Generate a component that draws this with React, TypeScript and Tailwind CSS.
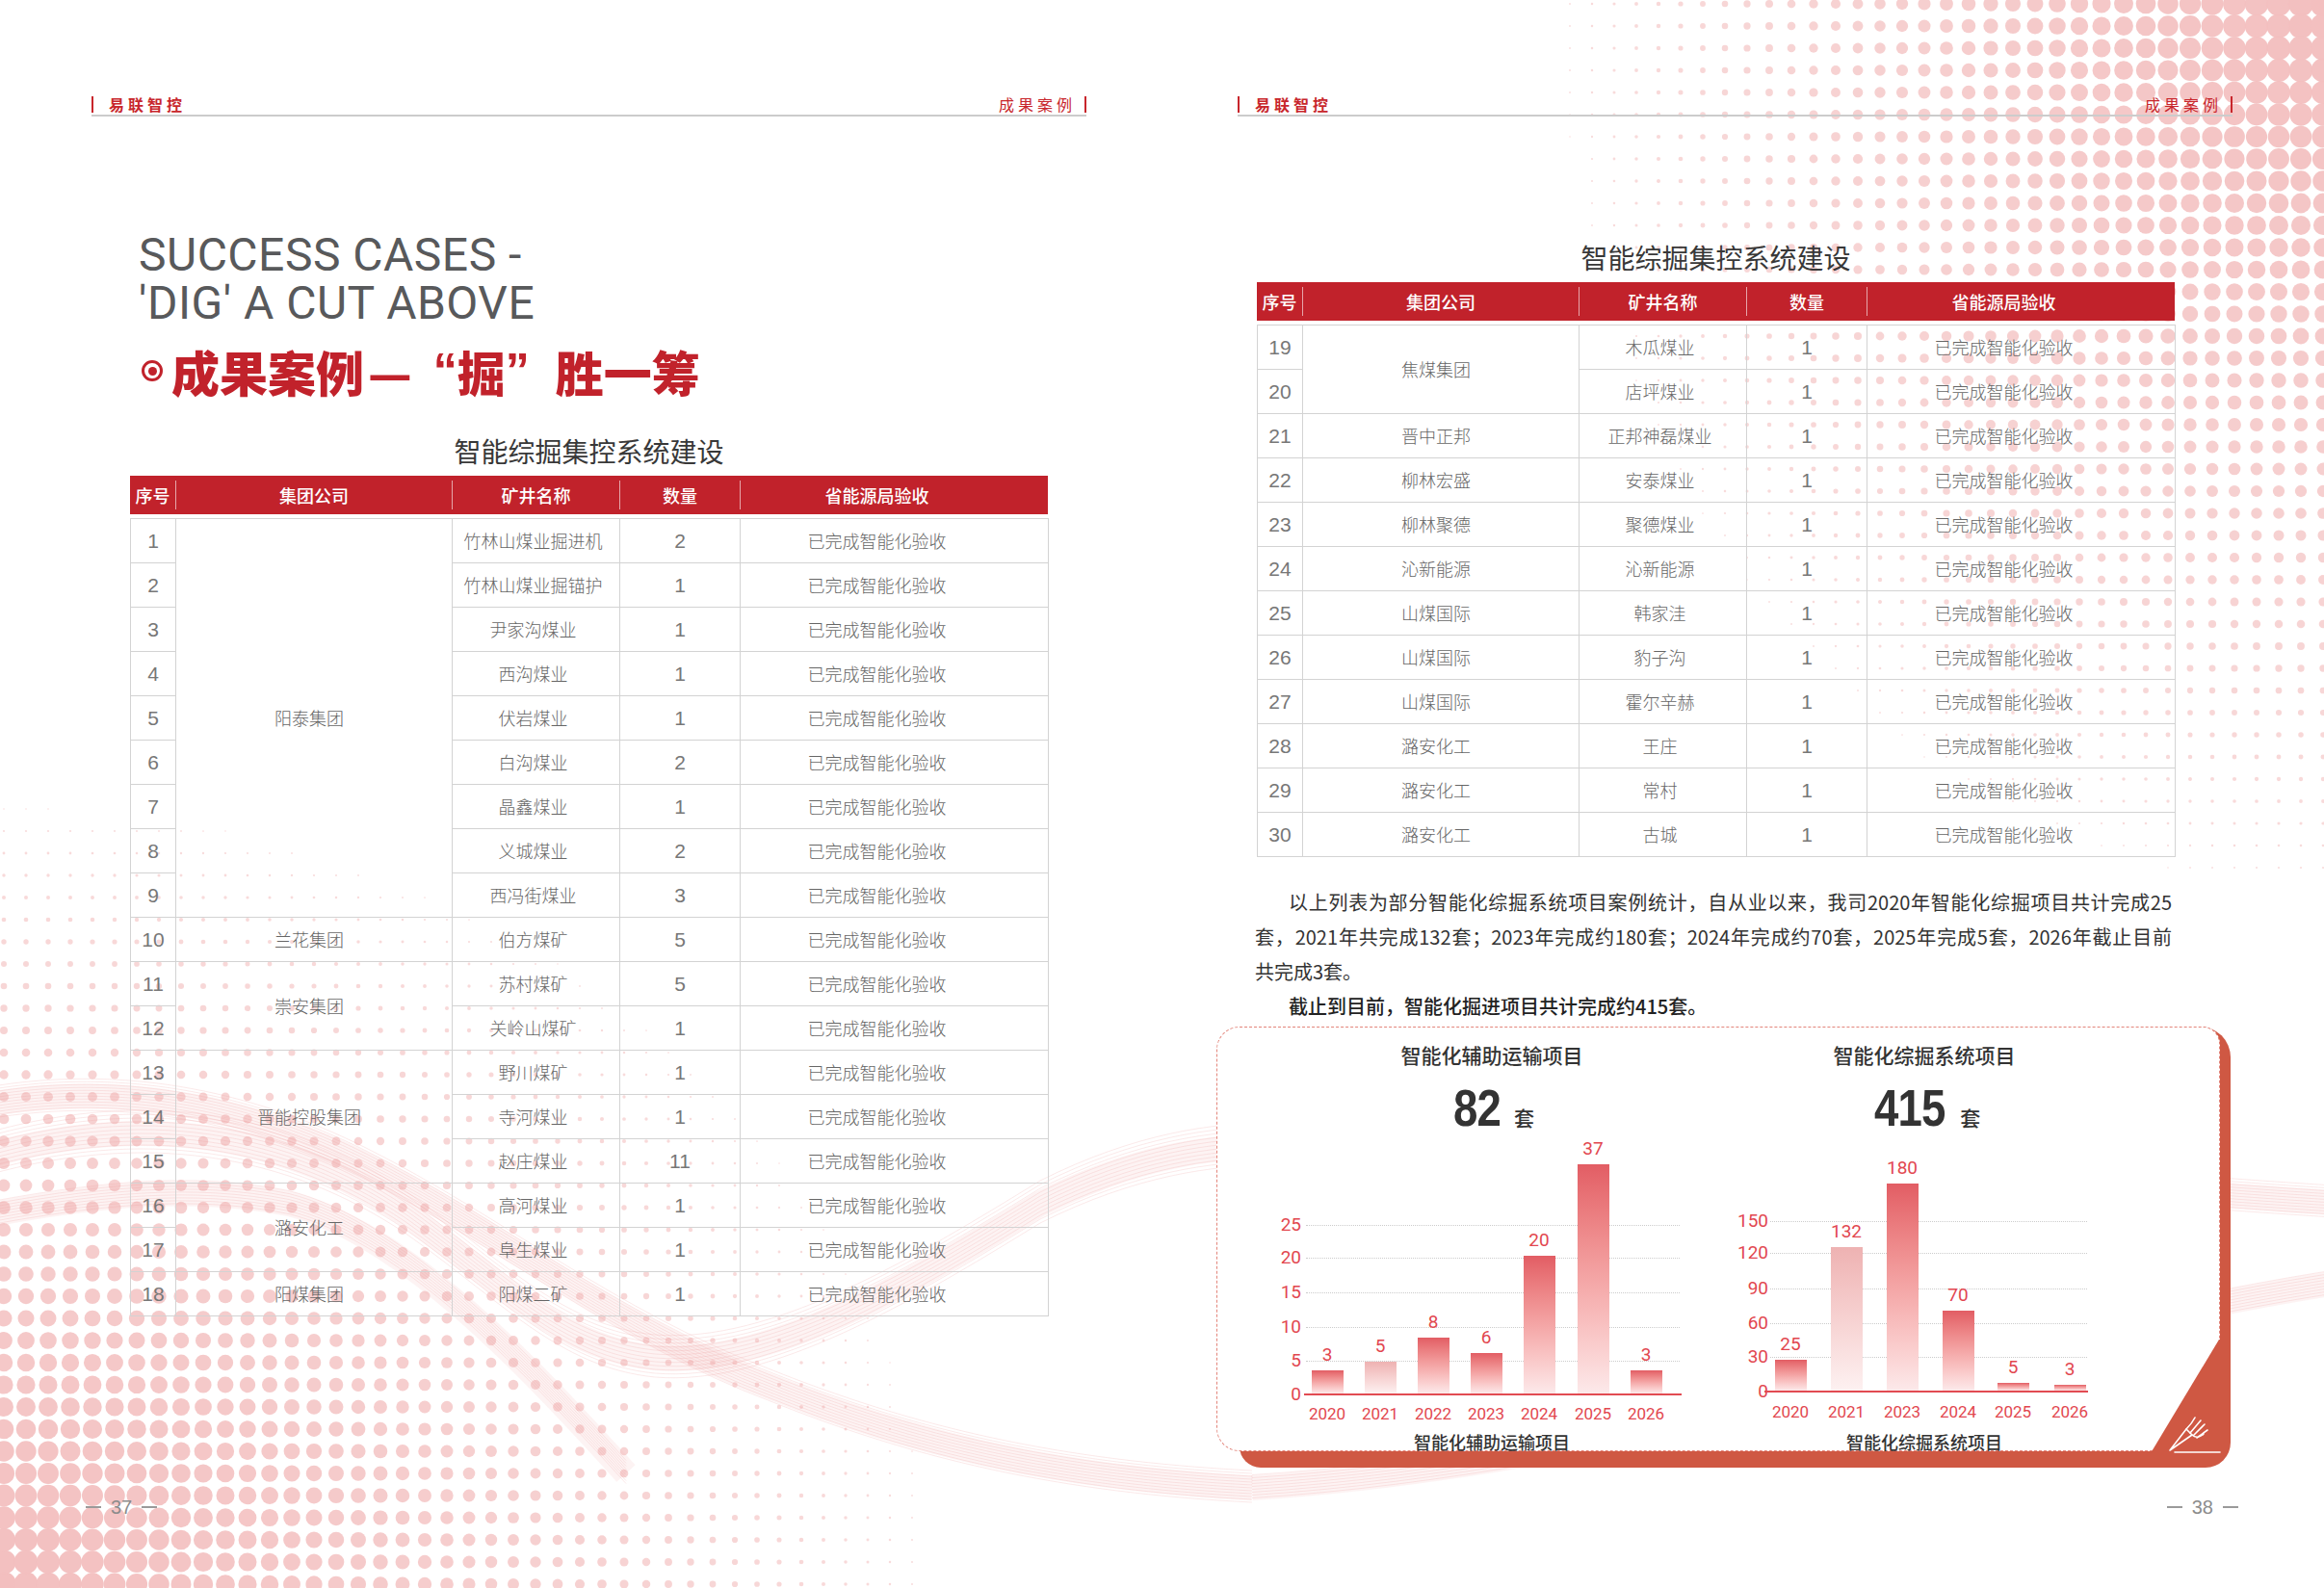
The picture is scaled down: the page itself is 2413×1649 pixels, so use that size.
import type { ReactNode } from "react";

type Row = { no: number; group?: string; span?: number; mine: string; qty: number };

const leftRows: Row[] = [
  { no: 1, group: "阳泰集团", span: 9, mine: "竹林山煤业掘进机", qty: 2 },
  { no: 2, mine: "竹林山煤业掘锚护", qty: 1 },
  { no: 3, mine: "尹家沟煤业", qty: 1 },
  { no: 4, mine: "西沟煤业", qty: 1 },
  { no: 5, mine: "伏岩煤业", qty: 1 },
  { no: 6, mine: "白沟煤业", qty: 2 },
  { no: 7, mine: "晶鑫煤业", qty: 1 },
  { no: 8, mine: "义城煤业", qty: 2 },
  { no: 9, mine: "西冯街煤业", qty: 3 },
  { no: 10, group: "兰花集团", span: 1, mine: "伯方煤矿", qty: 5 },
  { no: 11, group: "崇安集团", span: 2, mine: "苏村煤矿", qty: 5 },
  { no: 12, mine: "关岭山煤矿", qty: 1 },
  { no: 13, group: "晋能控股集团", span: 3, mine: "野川煤矿", qty: 1 },
  { no: 14, mine: "寺河煤业", qty: 1 },
  { no: 15, mine: "赵庄煤业", qty: 11 },
  { no: 16, group: "潞安化工", span: 2, mine: "高河煤业", qty: 1 },
  { no: 17, mine: "阜生煤业", qty: 1 },
  { no: 18, group: "阳煤集团", span: 1, mine: "阳煤二矿", qty: 1 },
];

const rightRows: Row[] = [
  { no: 19, group: "焦煤集团", span: 2, mine: "木瓜煤业", qty: 1 },
  { no: 20, mine: "店坪煤业", qty: 1 },
  { no: 21, group: "晋中正邦", span: 1, mine: "正邦神磊煤业", qty: 1 },
  { no: 22, group: "柳林宏盛", span: 1, mine: "安泰煤业", qty: 1 },
  { no: 23, group: "柳林聚德", span: 1, mine: "聚德煤业", qty: 1 },
  { no: 24, group: "沁新能源", span: 1, mine: "沁新能源", qty: 1 },
  { no: 25, group: "山煤国际", span: 1, mine: "韩家洼", qty: 1 },
  { no: 26, group: "山煤国际", span: 1, mine: "豹子沟", qty: 1 },
  { no: 27, group: "山煤国际", span: 1, mine: "霍尔辛赫", qty: 1 },
  { no: 28, group: "潞安化工", span: 1, mine: "王庄", qty: 1 },
  { no: 29, group: "潞安化工", span: 1, mine: "常村", qty: 1 },
  { no: 30, group: "潞安化工", span: 1, mine: "古城", qty: 1 },
];

const narrow = "font-['Liberation_Sans_Narrow','Liberation_Sans',sans-serif]";
const colW = ["w-[47px]", "w-[287px]", "w-[174px]", "w-[125px]", "w-[320px]"];
const heads = ["序号", "集团公司", "矿井名称", "数量", "省能源局验收"];

// halftone dots, computed once
type Dot = { x: number; y: number; r: number; o: number };
const dots: Dot[] = [];
for (let x = 1400; x <= 2424; x += 23) {
  for (let y = 4; y <= 1010; y += 23) {
    const d = Math.hypot((2413 - x) / 860, y / 1000);
    if (d < 1) {
      const r = 13.5 * Math.pow(1 - d, 1.1);
      if (r > 0.8) dots.push({ x, y, r, o: 0.5 + 0.5 * (1 - d) });
    }
  }
}
for (let x = 4; x <= 1120; x += 23) {
  for (let y = 1645; y >= 720; y -= 23) {
    const d = Math.hypot(x / 1050, (1649 - y) / 880);
    if (d < 1) {
      const r = 13 * Math.pow(1 - d, 1.1);
      if (r > 0.8) dots.push({ x, y, r, o: 0.5 + 0.5 * (1 - d) });
    }
  }
}

function Ribbon({ d, count = 12, spread = 3 }: { d: string; count?: number; spread?: number }) {
  return (
    <g fill="none">
      <path d={d} stroke="#f1b3b3" strokeWidth={26} opacity={0.16} />
      {Array.from({ length: count }, (_, i) => (
        <path
          key={i}
          d={d}
          transform={`translate(0 ${i * spread - (count * spread) / 2})`}
          stroke="#eb9d9d"
          strokeWidth={1}
          opacity={0.22}
        />
      ))}
    </g>
  );
}

function Backdrop() {
  return (
    <svg
      className="pointer-events-none absolute inset-0"
      width={2413}
      height={1649}
      viewBox="0 0 2413 1649"
    >
      {dots.map((p, i) => (
        <circle key={i} cx={p.x} cy={p.y} r={p.r} fill="#f3bfbf" opacity={p.o} />
      ))}
      <Ribbon d="M -30 1150 C 120 1120, 260 1150, 380 1210 C 520 1280, 640 1380, 800 1440 C 950 1500, 1100 1535, 1300 1545" />
      <Ribbon d="M -30 1205 C 150 1150, 300 1180, 420 1260 C 520 1330, 580 1400, 680 1410 C 800 1420, 950 1330, 1080 1250 C 1180 1200, 1260 1190, 1320 1190" spread={4} />
      <Ribbon d="M -30 1265 C 100 1240, 200 1230, 300 1250 C 420 1280, 550 1420, 650 1530" count={9} />
      <Ribbon d="M 1300 1190 C 1700 1180, 2100 1230, 2440 1250" />
      <Ribbon d="M 1300 1545 C 1700 1520, 2100 1380, 2440 1330" count={9} />
    </svg>
  );
}

function PageHeader() {
  return (
    <div className="flex h-[24px] items-center justify-between border-b-2 border-[#cccccc]">
      <div className="flex items-center">
        <span className="h-[17px] w-[2px] bg-[#c8262c]" />
        <span className="ml-[16px] text-[16px] leading-[16px] font-bold tracking-[4px] text-[#c8262c]">
          易联智控
        </span>
      </div>
      <div className="flex items-center">
        <span className="text-[16px] leading-[16px] tracking-[4px] text-[#c8262c]">成果案例</span>
        <span className="ml-[9px] h-[17px] w-[2px] bg-[#c8262c]" />
      </div>
    </div>
  );
}

function PageNo({ children, className }: { children: ReactNode; className: string }) {
  return (
    <div className={`flex items-center gap-[10px] ${className}`}>
      <span className="h-[1.5px] w-[16px] bg-[#9a9a9a]" />
      <span className={`${narrow} text-[20px] leading-[20px] text-[#8c8c8c]`}>{children}</span>
      <span className="h-[1.5px] w-[16px] bg-[#9a9a9a]" />
    </div>
  );
}

function CaseTable({ rows, className }: { rows: Row[]; className: string }) {
  const cell = "border border-[#d3d3d3] p-0 text-center align-middle text-[18px] font-light text-[#666]";
  const num = `border border-[#d3d3d3] p-0 text-center align-middle text-[21px] text-[#777] ${narrow}`;
  return (
    <div className={`w-[953px] ${className}`}>
      <h3 className="text-center text-[28px] leading-[28px] text-[#383838]">智能综掘集控系统建设</h3>
      <div className="mt-[12px] flex h-[40px] bg-[#c1222b] py-[5px]">
        {heads.map((h, i) => (
          <div
            key={h}
            className={`flex items-center justify-center text-[18px] font-medium text-white ${colW[i]} ${
              i > 0 ? "border-l border-white/60" : ""
            } ${i === 4 ? "pr-[36px]" : ""}`}
          >
            {h}
          </div>
        ))}
      </div>
      <table className="mt-[4px] w-full table-fixed border-collapse border border-[#d3d3d3]">
        <colgroup>
          {colW.map((c) => (
            <col key={c} className={c} />
          ))}
        </colgroup>
        <tbody>
          {rows.map((r) => (
            <tr key={r.no} className="h-[46px]">
              <td className={num}>{r.no}</td>
              {r.group && (
                <td rowSpan={r.span} className={`${cell} pr-[10px]`}>
                  {r.group}
                </td>
              )}
              <td className={`${cell} pr-[6px]`}>{r.mine}</td>
              <td className={num}>{r.qty}</td>
              <td className={`${cell} pr-[36px]`}>已完成智能化验收</td>
            </tr>
          ))}
        </tbody>
      </table>
    </div>
  );
}

type Bar = { year: string; v: number; c: number; h: number; light?: boolean };
type Tick = { l: string; y: number };

type ChartProps = {
  className: string;
  headClass: string;
  title: string;
  total: string;
  ticks: Tick[];
  tickW: number;
  axis: { top: number; left: number; width: number };
  grid: { left: number; width: number };
  base: number;
  xTop: number;
  bars: Bar[];
};

function Chart({ className, headClass, title, total, ticks, tickW, axis, grid, base, xTop, bars }: ChartProps) {
  return (
    <div className={`flex flex-col ${className}`}>
      <div className={`flex w-[400px] flex-col items-center pt-[18px] ${headClass}`}>
        <h4 className="text-[21px] leading-[21px] font-medium text-[#333]">{title}</h4>
        <div className="mt-[18px] flex items-baseline gap-[10px]">
          <span
            className={`${narrow} inline-block origin-center scale-x-[0.86] text-[53px] leading-[53px] font-bold tracking-[-1px] text-[#333]`}
          >
            {total}
          </span>
          <span className="text-[21px] font-medium text-[#333]">套</span>
        </div>
      </div>
      <div className="relative mt-[12px] h-[296px] font-['Roboto',sans-serif] text-[#e2474f]">
        {ticks.slice(1).map((t) => (
          <div
            key={t.l}
            className="absolute border-t border-dotted border-[#cccccc]"
            style={{ top: t.y, left: grid.left, width: grid.width }}
          />
        ))}
        {ticks.map((t) => (
          <div
            key={t.l}
            className="absolute left-0 h-[22px] text-right text-[19px] leading-[22px]"
            style={{ top: t.y - 11, width: tickW }}
          >
            {t.l}
          </div>
        ))}
        {bars.map((b) => (
          <div key={b.year}>
            <div
              className="absolute w-[60px] text-center text-[19px] leading-[20px]"
              style={{ left: b.c - 30, top: base - b.h - 26 }}
            >
              {b.v}
            </div>
            <div
              className={`absolute w-[33px] bg-linear-to-b ${
                b.light ? "from-[#eeb2b2] to-[#fdf1f1]" : "from-[#e25d64] to-[#fce9ea]"
              }`}
              style={{ left: b.c - 16.5, top: base - b.h, height: b.h }}
            />
            <div
              className="absolute w-[60px] text-center text-[17px] leading-[18px]"
              style={{ left: b.c - 30, top: xTop }}
            >
              {b.year}
            </div>
          </div>
        ))}
        <div
          className="absolute h-[2px] bg-[#e24b52]"
          style={{ top: axis.top, left: axis.left, width: axis.width }}
        />
      </div>
      <p className={`mt-[4px] w-[400px] text-center text-[18px] leading-[18px] font-medium text-[#333] ${headClass}`}>
        {title}
      </p>
    </div>
  );
}

function ChartPanel({ className }: { className: string }) {
  return (
    <div className={`relative h-[458px] w-[1053px] ${className}`}>
      <div className="absolute inset-y-0 left-[24px] right-0 rounded-tr-[32px] rounded-br-[26px] rounded-bl-[22px] bg-[#cf5843]" />
      <div className="absolute left-0 top-0 flex h-[441px] w-[1042px] rounded-tl-[24px] rounded-tr-[18px] rounded-bl-[24px] border border-dashed border-[#e3857b] bg-white">
        <Chart
          className="w-[526px]"
          headClass="ml-[85px]"
          title="智能化辅助运输项目"
          total="82"
          tickW={87}
          ticks={[
            { l: "0", y: 259 },
            { l: "5", y: 224 },
            { l: "10", y: 189 },
            { l: "15", y: 153 },
            { l: "20", y: 117 },
            { l: "25", y: 83 },
          ]}
          axis={{ top: 258, left: 90, width: 392 }}
          grid={{ left: 92, width: 388 }}
          base={258}
          xTop={270}
          bars={[
            { year: "2020", v: 3, c: 114, h: 24 },
            { year: "2021", v: 5, c: 169, h: 33, light: true },
            { year: "2022", v: 8, c: 224, h: 58 },
            { year: "2023", v: 6, c: 279, h: 42 },
            { year: "2024", v: 20, c: 334, h: 143 },
            { year: "2025", v: 37, c: 390, h: 238 },
            { year: "2026", v: 3, c: 445, h: 24 },
          ]}
        />
        <Chart
          className="w-[514px]"
          headClass="ml-[8px]"
          title="智能化综掘系统项目"
          total="415"
          tickW={46}
          ticks={[
            { l: "0", y: 256 },
            { l: "30", y: 220 },
            { l: "60", y: 185 },
            { l: "90", y: 149 },
            { l: "120", y: 112 },
            { l: "150", y: 79 },
          ]}
          axis={{ top: 255, left: 42, width: 336 }}
          grid={{ left: 48, width: 329 }}
          base={255}
          xTop={268}
          bars={[
            { year: "2020", v: 25, c: 69, h: 32 },
            { year: "2021", v: 132, c: 127, h: 149, light: true },
            { year: "2023", v: 180, c: 185, h: 215 },
            { year: "2024", v: 70, c: 243, h: 83 },
            { year: "2025", v: 5, c: 300, h: 8 },
            { year: "2026", v: 3, c: 359, h: 6 },
          ]}
        />
      </div>
      {/* corner tab with pen icon */}
      <svg className="absolute left-[967px] top-[322px]" width={86} height={136} viewBox="0 0 86 136">
        <polygon points="74,3 76,3 76,121 3,121" fill="#cf5843" />
        <g stroke="#fff" strokeWidth={1.6} fill="none" strokeLinecap="round" strokeLinejoin="round">
          <polygon points="23,118 40,96 46,102" />
          <path d="M40 96 C44 92 47 88 49 84 M44 100 L55 87 M48 102 L59 91 M51 105 L62 97 M46 102 C50 106 55 104 58 101" />
          <path d="M28 120 L75 120" />
        </g>
      </svg>
    </div>
  );
}

function LeftPage() {
  return (
    <section className="flex h-full flex-col pl-[95px] pr-[78px] pt-[97px]">
      <PageHeader />
      <div className="ml-[49px] mt-[119px] font-['Roboto',sans-serif] text-[48px] leading-[50px] tracking-[0.5px] text-[#58595b]">
        <p>SUCCESS CASES -</p>
        <p>'DIG' A CUT ABOVE</p>
      </div>
      <h2 className="ml-[52px] mt-[21px] flex h-[48px] items-center text-[50px] leading-[48px] font-black text-[#c1222b]">
        <span className="mr-[9px] flex h-[22px] w-[22px] items-center justify-center rounded-full border-[3px] border-[#c1222b]">
          <span className="h-[9px] w-[9px] rounded-full bg-[#c1222b]" />
        </span>
        <span>成果案例</span>
        <span className="ml-[4px]">—</span>
        <span className="ml-[22px] font-['Liberation_Sans',sans-serif] font-bold">“</span>
        <span>掘</span>
        <span className="font-['Liberation_Sans',sans-serif] font-bold">”</span>
        <span className="ml-[27px]">胜一筹</span>
      </h2>
      <CaseTable rows={leftRows} className="ml-[40px] mt-[45px]" />
      <PageNo className="mb-[74px] -ml-[6px] mt-auto">37</PageNo>
    </section>
  );
}

function RightPage() {
  return (
    <section className="flex h-full flex-col pl-[79px] pr-[95px] pt-[97px]">
      <PageHeader />
      <CaseTable rows={rightRows} className="ml-[20px] mt-[132px]" />
      <div className="ml-[18px] mt-[29px] w-[952px] text-[20px] leading-[36px] text-[#333]">
        <p className="indent-[35px] [text-align-last:justify]">
          以上列表为部分智能化综掘系统项目案例统计，自从业以来，我司2020年智能化综掘项目共计完成25
        </p>
        <p className="[text-align-last:justify]">
          套，2021年共完成132套；2023年完成约180套；2024年完成约70套，2025年完成5套，2026年截止目前
        </p>
        <p>共完成3套。</p>
        <p className="indent-[35px] font-medium text-[#222]">截止到目前，智能化掘进项目共计完成约415套。</p>
      </div>
      <ChartPanel className="-ml-[22px] mt-[3px]" />
      <PageNo className="mb-[74px] -mr-[6px] mt-auto self-end">38</PageNo>
    </section>
  );
}

export default function App() {
  return (
    <div className="relative h-[1649px] w-[2413px] overflow-hidden bg-white font-['Noto_Sans_CJK_SC','Noto_Sans',sans-serif] text-[#333]">
      <Backdrop />
      <div className="relative grid h-full grid-cols-[1206px_1207px]">
        <LeftPage />
        <RightPage />
      </div>
    </div>
  );
}
